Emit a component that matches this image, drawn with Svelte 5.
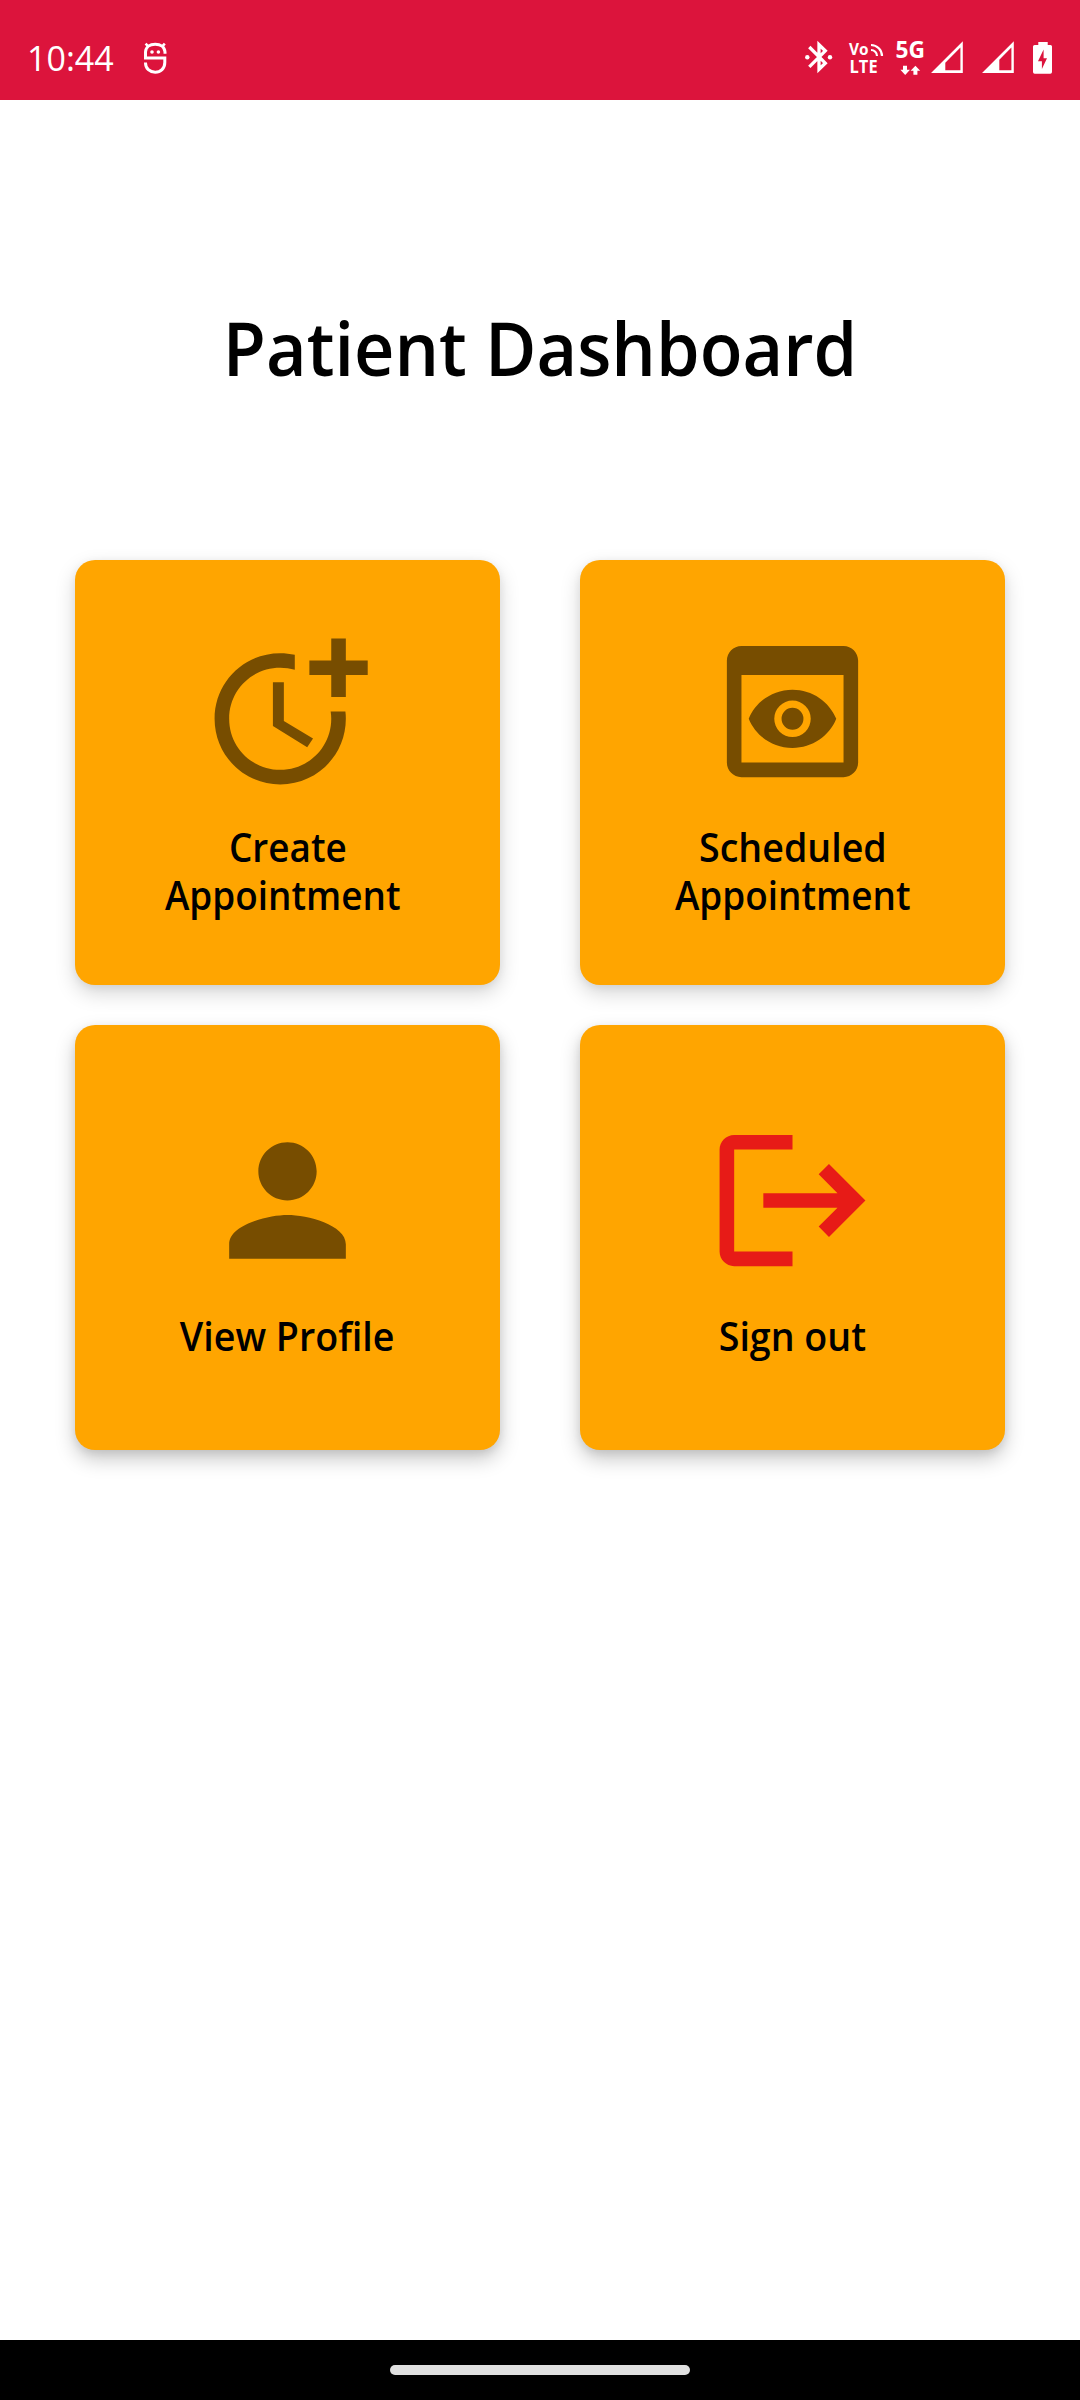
<script>
  const cards = [
    { id: 'create', lines: ['Create', 'Appointment'], icon: 'time' },
    { id: 'scheduled', lines: ['Scheduled', 'Appointment'], icon: 'preview' },
    { id: 'profile', lines: ['View Profile'], icon: 'person' },
    { id: 'signout', lines: ['Sign out'], icon: 'exit' }
  ];
  const paths = {
    time: 'M10 8v6l4.7 2.9.8-1.2-4-2.4V8zM17.92 12c.05.33.08.66.08 1 0 3.9-3.1 7-7 7s-7-3.1-7-7 3.1-7 7-7c.7 0 1.37.1 2 .29V4.23C12.36 4.08 11.69 4 11 4c-5 0-9 4-9 9s4 9 9 9 9-4 9-9c0-.34-.02-.67-.06-1zM20 5V2h-2v3h-3v2h3v3h2V7h3V5z',
    preview: 'M19 3H5c-1.11 0-2 .9-2 2v14c0 1.1.89 2 2 2h14c1.1 0 2-.9 2-2V5c0-1.1-.89-2-2-2zm0 16H5V7h14zM12 9c-2.73 0-5.06 1.66-6 4 .94 2.34 3.27 4 6 4s5.06-1.66 6-4c-.94-2.34-3.27-4-6-4zm0 6.5a2.5 2.5 0 0 1 0-5 2.5 2.5 0 0 1 0 5zM12 11.5a1.5 1.5 0 1 0 0 3 1.5 1.5 0 0 0 0-3z',
    person: 'M12 12c2.21 0 4-1.79 4-4s-1.79-4-4-4-4 1.79-4 4 1.79 4 4 4zm0 2c-2.67 0-8 1.34-8 4v2h16v-2c0-2.66-5.33-4-8-4z',
    exit: 'M17 7l-1.41 1.41L18.17 11H8v2h10.17l-2.58 2.58L17 17l5-5zM4 5h8V3H4c-1.1 0-2 .9-2 2v14c0 1.1.9 2 2 2h8v-2H4z'
  };
</script>

<div class="screen">
  <header class="status">
    <span class="clock">10:44</span>
    <svg class="app-mark" width="24" height="34" viewBox="0 0 24 34">
      <g fill="none" stroke="#fff" stroke-width="3">
        <path d="M22 13.8V12C21.6 7 17.5 4.2 12.2 4.2S2.8 7 2.5 12V18H21.8V22.5C21.8 28.5 17.6 32.2 12.2 32.2S2.5 28.5 2.5 23V22.6" />
        <path d="M5.6 6.8L2.6 3.6M18.8 6.8L21.8 3.6" stroke-width="2.6" />
      </g>
      <circle cx="9" cy="12" r="1.8" fill="#fff" /><circle cx="15.4" cy="12" r="1.8" fill="#fff" />
    </svg>

    <svg class="bt" width="28" height="34" viewBox="0 0 28 34">
      <path d="M4.3 7L20.3 23.2 14 29.3V4.7L20.3 10.8 4.3 26.8" fill="none" stroke="#fff" stroke-width="3.3" />
      <circle cx="2.3" cy="17.2" r="2.2" fill="#fff" /><circle cx="25" cy="17.2" r="2.2" fill="#fff" />
    </svg>
    <svg class="volte" width="35" height="34" viewBox="0 0 35 34">
      <text x="0" y="14.9" font-size="16.5" textLength="19.5" lengthAdjust="spacingAndGlyphs">Vo</text>
      <text x="0.6" y="32.6" font-size="17.5" textLength="28" lengthAdjust="spacingAndGlyphs">LTE</text>
      <g fill="none" stroke="#fff" stroke-width="2.2"><path d="M22 5A11 11 0 0 1 33 16M22 10A6 6 0 0 1 28 16" /></g>
    </svg>
    <svg class="fiveg" width="30" height="34" viewBox="0 0 30 34">
      <text x="-0.5" y="18" font-size="22.5" textLength="29.5" lengthAdjust="spacingAndGlyphs">5G</text>
      <path d="M7 25.8h4v4h3L9.2 34.9 4.4 29.8H7zM17.4 34.8v-4h-2.8l4.8-5 4.8 5h-2.8v4z" fill="#fff" />
    </svg>
    <svg class="signal" width="32" height="34" viewBox="0 0 32 34">
      <path fill-rule="evenodd" d="M0 33L31.8 1.2V33zM14.3 22.7V30.3H29.4V7.6z" fill="#fff" />
    </svg>
    <svg class="signal second" width="32" height="34" viewBox="0 0 32 34">
      <path fill-rule="evenodd" d="M0 33L31.8 1.2V33zM17.3 19.7V30.3H29.4V7.6z" fill="#fff" />
    </svg>
    <svg class="battery" width="20" height="34" viewBox="0 0 20 34">
      <path fill-rule="evenodd" d="M5.3 2h9.4v3H17.5Q19 5 19 6.6V32Q19 33.7 17.3 33.7H1.7Q0 33.7 0 32V6.6Q0 5 1.7 5H5.3zM10.6 9.5L5 21.3H8.9V29L14 18.2H10.6z" fill="#fff" />
    </svg>
  </header>

  <main>
    <h1>Patient Dashboard</h1>
    <section class="grid">
      {#each cards as card (card.id)}
        <div class="card {card.id}">
          <svg class="icon" viewBox="0 0 24 24"><path d={paths[card.icon]} /></svg>
          <div class="label">
            {#each card.lines as line}
              <span class="line {line.split(' ')[0].toLowerCase()}">{line}</span>
            {/each}
          </div>
        </div>
      {/each}
    </section>
  </main>

  <footer><div class="handle"></div></footer>
</div>

<style>
  :global(body) { margin: 0; background: #fff; }
  .screen {
    width: 1080px;
    height: 2400px;
    display: flex;
    flex-direction: column;
    font-family: "Open Sans", "Noto Sans", sans-serif;
    background: #fff;
    color: #000;
  }
  .status {
    box-sizing: border-box;
    height: 100px;
    flex: none;
    display: flex;
    align-items: flex-start;
    padding: 40px 27px 0 27px;
    background: #dc143c;
    color: #fff;
  }
  .status svg { flex: none; display: block; overflow: visible; }
  .status text { fill: #fff; font-weight: 700; font-family: "Open Sans", sans-serif; }
  .clock { width: 116px; font-size: 34px; line-height: 36px; white-space: nowrap; }
  .bt { margin-left: auto; }
  .volte { margin-left: 16px; }
  .fiveg { margin-left: 12px; }
  .signal { margin-left: 5px; }
  .signal.second { margin-left: 19px; }
  .battery { margin-left: 19px; }
  main { flex: 1; }
  h1 {
    margin: 0;
    padding-top: 187px;
    height: 273px;
    font-size: 75px;
    line-height: 120px;
    font-weight: 600;
    text-align: center;
    white-space: nowrap;
    transform: scaleX(0.936);
  }
  .grid {
    display: grid;
    grid-template-columns: 425px 425px;
    grid-auto-rows: 425px;
    gap: 40px 80px;
    padding: 0 75px;
  }
  .card {
    display: flex;
    flex-direction: column;
    align-items: center;
    justify-content: center;
    gap: 26px;
    border-radius: 20px;
    background: #ffa500;
    box-shadow: 0 8px 20px rgba(0, 0, 0, 0.17), 0 2px 8px rgba(0, 0, 0, 0.06);
  }
  .profile, .signout {
    box-shadow: 0 9px 20px rgba(0, 0, 0, 0.22), 0 3px 8px rgba(0, 0, 0, 0.08);
  }
  .icon { width: 175px; height: 175px; fill: #774d00; flex: none; }
  .signout .icon { fill: #e71b17; }
  .label {
    display: flex;
    flex-direction: column;
    align-items: center;
    height: 48px;
    font-size: 40px;
    line-height: 44px;
    font-weight: 600;
    white-space: nowrap;
  }
  .create .label, .scheduled .label { height: 96px; gap: 4px; }
  .create .appointment { margin-right: 9px; }
  .line { transform: scaleX(0.94); }
  .line.create, .line.appointment { transform: scaleX(0.922); }
  footer {
    height: 60px;
    flex: none;
    display: flex;
    align-items: center;
    justify-content: center;
    background: #000;
  }
  .handle { width: 300px; height: 10px; border-radius: 5px; background: #e0e0e0; }
</style>
